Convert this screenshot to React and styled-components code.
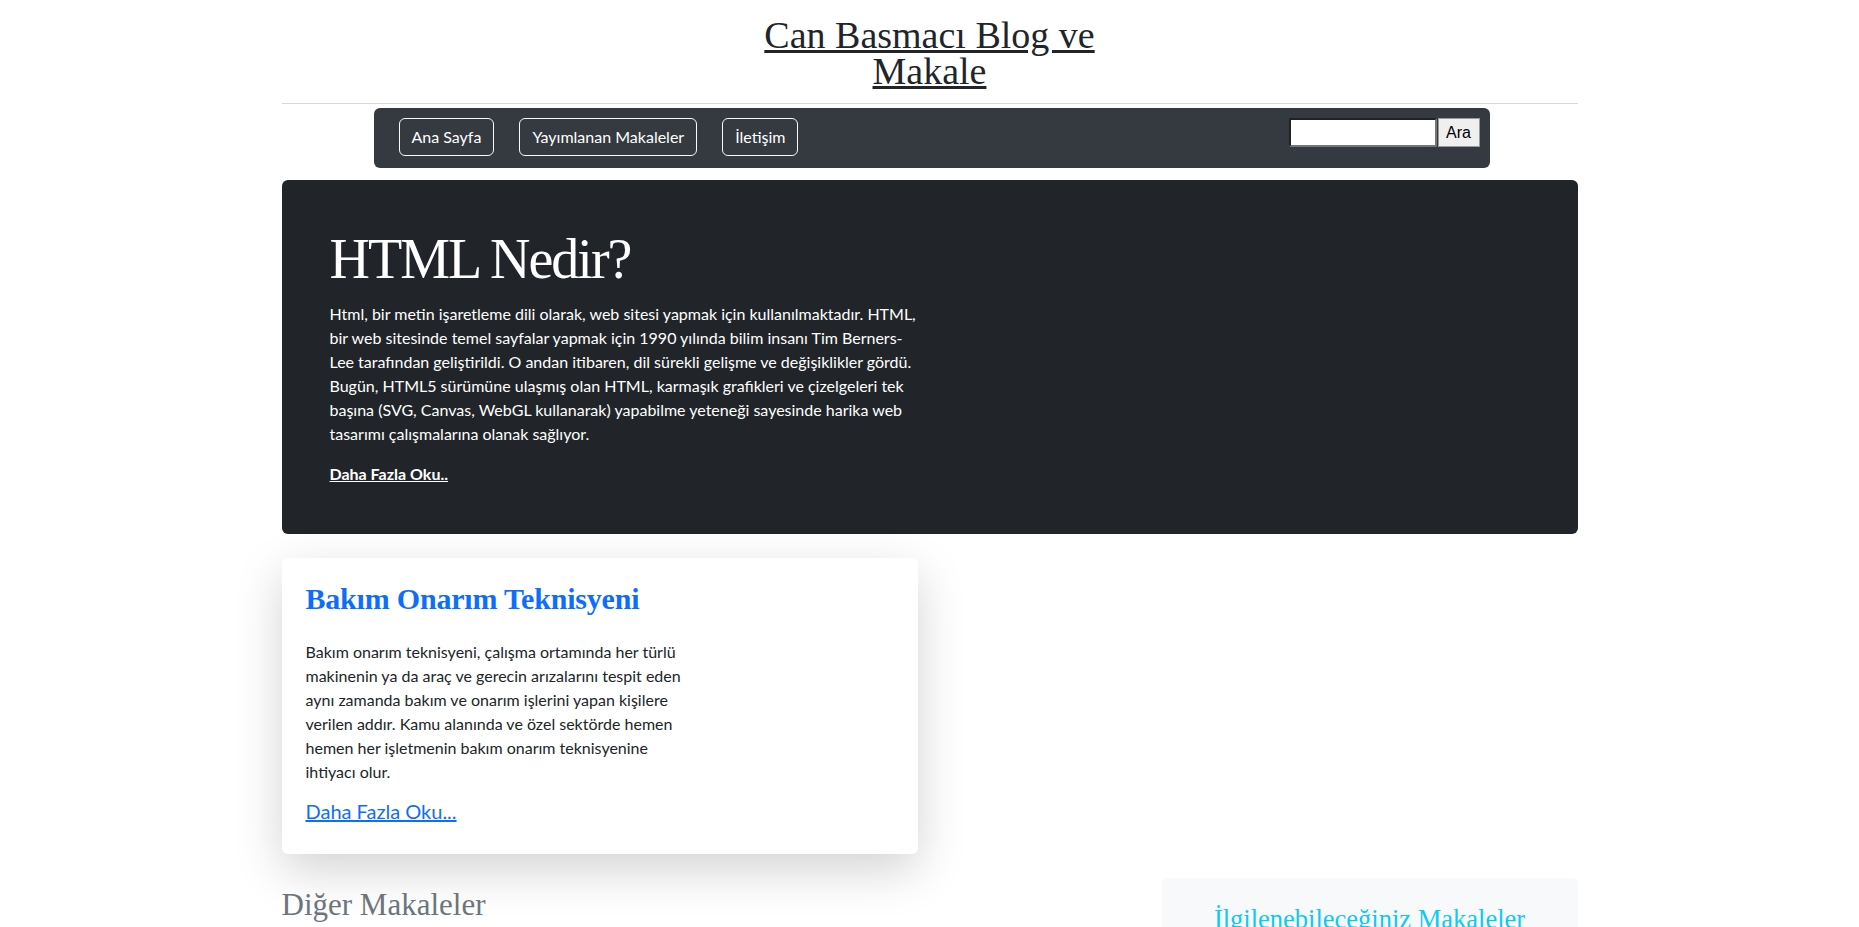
import React from 'react'
import styled, { createGlobalStyle } from 'styled-components'

const GlobalStyle = createGlobalStyle`
	body {
		margin: 0;
		background: #fff;
		color: #212529;
		font-family: Lato, 'Noto Sans', sans-serif;
		font-size: 16px;
		line-height: 24px;
	}
`

const serif = `'Liberation Serif', 'DejaVu Serif', serif`

function App() {
	return (
		<>
			<GlobalStyle />
			<StyledContainer>
				<StyledHeader>
					<StyledLogo href="#">Can Basmacı Blog ve Makale</StyledLogo>
				</StyledHeader>
				<StyledNav>
					<StyledNavButton href="#">Ana Sayfa</StyledNavButton>
					<StyledNavButton href="#">Yayımlanan Makaleler</StyledNavButton>
					<StyledNavButton href="#">İletişim</StyledNavButton>
					<StyledSearch onSubmit={(e) => e.preventDefault()}>
						<StyledSearchInput type="text" />
						<StyledSearchButton type="submit">Ara</StyledSearchButton>
					</StyledSearch>
				</StyledNav>
				<StyledHero>
					<StyledHeroTitle>HTML Nedir?</StyledHeroTitle>
					<StyledHeroText>
						Html, bir metin işaretleme dili olarak, web sitesi yapmak için
						kullanılmaktadır. HTML, bir web sitesinde temel sayfalar yapmak için
						1990 yılında bilim insanı Tim Berners-Lee tarafından geliştirildi. O
						andan itibaren, dil sürekli gelişme ve değişiklikler gördü. Bugün,
						HTML5 sürümüne ulaşmış olan HTML, karmaşık grafikleri ve çizelgeleri
						tek başına (SVG, Canvas, WebGL kullanarak) yapabilme yeteneği
						sayesinde harika web tasarımı çalışmalarına olanak sağlıyor.
					</StyledHeroText>
					<StyledHeroLink href="#">Daha Fazla Oku..</StyledHeroLink>
				</StyledHero>
				<StyledCardRow>
					<StyledCard>
						<StyledCardTitle>Bakım Onarım Teknisyeni</StyledCardTitle>
						<StyledCardText>
							Bakım onarım teknisyeni, çalışma ortamında her türlü makinenin ya
							da araç ve gerecin arızalarını tespit eden aynı zamanda bakım ve
							onarım işlerini yapan kişilere verilen addır. Kamu alanında ve
							özel sektörde hemen hemen her işletmenin bakım onarım
							teknisyenine ihtiyacı olur.
						</StyledCardText>
						<StyledCardLink href="#">Daha Fazla Oku...</StyledCardLink>
					</StyledCard>
				</StyledCardRow>
				<StyledLowerRow>
					<StyledMain>
						<StyledSectionTitle>Diğer Makaleler</StyledSectionTitle>
					</StyledMain>
					<StyledSidebar>
						<StyledSidebarTitle>İlgilenebileceğiniz Makaleler</StyledSidebarTitle>
					</StyledSidebar>
				</StyledLowerRow>
			</StyledContainer>
		</>
	)
}

const StyledContainer = styled.div`
	width: 1296px;
	margin: 0 auto;
`
const StyledHeader = styled.header`
	padding: 17px 0 13px;
	border-bottom: 1px solid #d9d9d9;
	text-align: center;
`
const StyledLogo = styled.a`
	display: inline-block;
	max-width: 380px;
	font-family: ${serif};
	font-size: 38px;
	line-height: 36px;
	color: #212529;
	text-decoration: underline;
`
const StyledNav = styled.nav`
	display: flex;
	align-items: flex-start;
	gap: 25px;
	margin: 4px 88px 12px 92px;
	padding: 10px 10px 12px 25px;
	background-color: #343a40;
	border-radius: 6px;
`
const StyledNavButton = styled.a`
	display: inline-block;
	padding: 6px 12px;
	border: 1px solid #f8f9fa;
	border-radius: 6px;
	color: #fff;
	font-size: 16px;
	line-height: 24px;
	text-decoration: none;
`
const StyledSearch = styled.form`
	display: flex;
	margin-left: auto;
`
const StyledSearchInput = styled.input`
	box-sizing: border-box;
	width: 148px;
	height: 29px;
	border: 2px inset #767676;
	border-radius: 2px;
	background: #fff;
`
const StyledSearchButton = styled.button`
	box-sizing: border-box;
	width: 42px;
	height: 29px;
	margin-left: 1px;
	padding: 0;
	border: 1px solid #9a9a9a;
	background: #efefef;
	color: #000;
	font-family: 'Liberation Sans', Arial, sans-serif;
	font-size: 16px;
`
const StyledHero = styled.section`
	padding: 48px;
	margin-bottom: 24px;
	background-color: #212529;
	border-radius: 6px;
	color: #fff;
`
const StyledHeroTitle = styled.h1`
	margin: 0 0 12px;
	font-family: ${serif};
	font-size: 56px;
	font-weight: 400;
	line-height: 62px;
	letter-spacing: -2px;
`
const StyledHeroText = styled.p`
	width: 592px;
	margin: 0 0 16px;
`
const StyledHeroLink = styled.a`
	color: #fff;
	font-weight: 700;
	text-decoration: underline;
`
const StyledCardRow = styled.div`
	display: grid;
	grid-template-columns: 1fr 1fr;
	gap: 24px;
	margin-bottom: 24px;
`
const StyledCard = styled.article`
	display: flex;
	flex-direction: column;
	align-items: flex-start;
	padding: 24px 24px 28px;
	background: #fff;
	border-radius: 6px;
	box-shadow: 0 16px 48px rgba(0, 0, 0, 0.175);
`
const StyledCardTitle = styled.h3`
	margin: 0 0 24px;
	font-family: ${serif};
	font-size: 30px;
	font-weight: 700;
	line-height: 34px;
	letter-spacing: -0.2px;
	color: #0d6efd;
`
const StyledCardText = styled.p`
	width: 388px;
	margin: 0 0 12px;
`
const StyledCardLink = styled.a`
	font-size: 20px;
	line-height: 30px;
	color: #0d6efd;
	text-decoration: underline;
`
const StyledLowerRow = styled.div`
	display: grid;
	grid-template-columns: 856px 416px;
	gap: 24px;
	align-items: start;
`
const StyledMain = styled.div`
	padding-top: 10px;
`
const StyledSectionTitle = styled.h3`
	margin: 0 0 24px;
	font-family: ${serif};
	font-size: 31px;
	font-weight: 400;
	line-height: 34px;
	color: #6c757d;
`
const StyledSidebar = styled.aside`
	padding: 24px;
	margin-bottom: 16px;
	background-color: #f8f9fa;
	border-radius: 6px;
	text-align: center;
`
const StyledSidebarTitle = styled.h4`
	margin: 0 0 8px;
	font-family: ${serif};
	font-size: 26.5px;
	font-weight: 400;
	line-height: 34px;
	color: #0dcaf0;
`

export default App
